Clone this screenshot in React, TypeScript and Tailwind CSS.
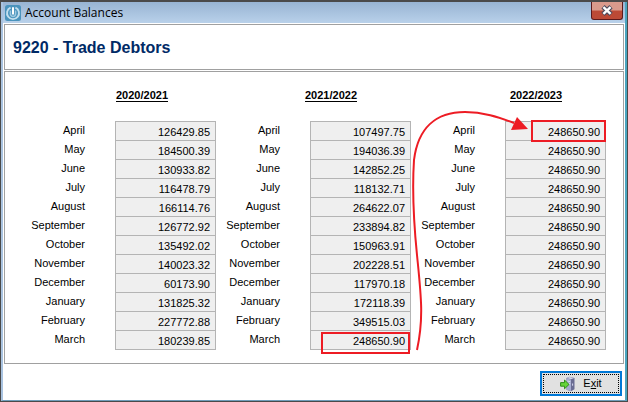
import React from "react";

interface YearBalances {
    year: string;
    headingClass: string;
    values: string[];
    marked?: number;
    markClass?: string;
}

const MONTHS = [
    "April", "May", "June", "July", "August", "September",
    "October", "November", "December", "January", "February", "March",
];

const YEARS: YearBalances[] = [
    {
        year: "2020/2021",
        headingClass: "pl-[95px]",
        values: [
            "126429.85", "184500.39", "130933.82", "116478.79", "166114.76", "126772.92",
            "135492.02", "140023.32", "60173.90", "131825.32", "227772.88", "180239.85",
        ],
    },
    {
        year: "2021/2022",
        headingClass: "pl-[89px]",
        values: [
            "107497.75", "194036.39", "142852.25", "118132.71", "264622.07", "233894.82",
            "150963.91", "202228.51", "117970.18", "172118.39", "349515.03", "248650.90",
        ],
        marked: 11,
        markClass: "top-[1px] right-0 w-[89px]",
    },
    {
        year: "2022/2023",
        headingClass: "pl-[99px]",
        values: Array(12).fill("248650.90"),
        marked: 0,
        markClass: "-top-[2px] -right-px w-[75px]",
    },
];

const PowerIcon = () => (
    <svg width="16" height="16" viewBox="0 0 16 16" className="shrink-0">
        <rect width="16" height="16" rx="2.5" fill="#4a93bc" />
        <path d="M5.6 2.6A6 6 0 1 0 10.4 2.6" fill="none" stroke="#c3dfee" strokeWidth="1.9" />
        <path d="M5.4 5.6v3.2a2.6 2.6 0 0 0 5.2 0V5.6" fill="none" stroke="#9cc8e0" strokeWidth="1.5" />
        <path d="M8 2.2v7.3" stroke="#ffffff" strokeWidth="2" />
    </svg>
);

const ExitIcon = () => (
    <svg width="16" height="16" viewBox="0 0 16 16" className="shrink-0">
        <path d="M6.5 2 9.5.8 14.5 2v11.2l-3.5 2-4.5-1.5z" fill="#6a6c93" />
        <path d="M6.5 2.2 11 3.4v11.8l-4.5-1.5z" fill="#a6abd0" />
        <path d="M6.5 2.1 9.7 1l4.5 1.1L11 3.3z" fill="#cfd3e8" />
        <path d="M7.3 5l3 .7M7.3 7l3 .7" stroke="#dfe2f2" strokeWidth=".9" />
        <path d="M12.6 7.5v2.2" stroke="#d5d8ee" strokeWidth="1" />
        <path d="M.6 6.6h3.9V4L9 8.4l-4.5 4.4v-2.6H.6z" fill="#66d43a" stroke="#2f8f1c" strokeWidth="1" />
    </svg>
);

const BalanceTable = ({ data }: { data: YearBalances }) => (
    <table className="flex-1 border-collapse">
        <thead>
            <tr>
                <th colSpan={2} className={`h-[33px] pb-[18px] text-left align-top font-bold leading-[15px] ${data.headingClass}`}>
                    <span className="inline-block h-[13px] border-b border-black leading-[13px]">{data.year}</span>
                </th>
            </tr>
        </thead>
        <tbody>
            {MONTHS.map((month, i) => (
                <tr key={month} className="h-[19px]">
                    <th scope="row" className="pr-[30px] pb-[3px] text-right font-normal leading-[14px]">{month}</th>
                    <td className="relative w-[100px] border border-[#b4b4b4] bg-[#efefef] pr-[5px] pt-[2px] text-right leading-[14px]">
                        {data.values[i]}
                        {data.marked === i && (
                            <span className={`absolute z-10 h-[22px] border-2 border-[#ed1c24] ${data.markClass}`} />
                        )}
                    </td>
                </tr>
            ))}
        </tbody>
    </table>
);

export default function App() {
    return (
        <div className="border border-t-2 border-[#4a4a4a] bg-white font-['Liberation_Sans',Arial,sans-serif] text-[11px] text-black">
            <div className="border-x-2 border-b border-b-[#6f9dba] border-l-[#a9c3e0] border-r-[#4aa5bf]">
                <header className="flex h-[21px] items-center justify-between bg-linear-to-b from-[#98b4d3] to-[#b9d1ea] px-[2px]">
                    <div className="flex items-center gap-1">
                        <PowerIcon />
                        <span className="font-['Open_Sans','Noto_Sans',sans-serif] text-[12px] leading-4">Account Balances</span>
                    </div>
                    <button
                        type="button"
                        aria-label="Close"
                        className="mb-[3px] flex h-[18px] w-8 items-center justify-center rounded-b-[3px] border border-t-0 border-[#5b1a1c] bg-linear-to-b from-[#d99a8c] from-45% to-[#bc4a36] to-55%"
                    >
                        <svg width="14" height="11" viewBox="0 0 14 11">
                            <path d="M3 1.8 11 9.2M11 1.8 3 9.2" stroke="#4b4a5c" strokeWidth="4.6" />
                            <path d="M3.4 2.2 10.6 8.8M10.6 2.2 3.4 8.8" stroke="#ffffff" strokeWidth="2.4" />
                        </svg>
                    </button>
                </header>

                <main className="flex flex-col gap-px px-px pt-px">
                    <section className="flex h-[46px] items-center border border-[#a0a0a0] px-2">
                        <h1 className="pt-px text-[16px] font-bold leading-5 text-[#002a66]">9220 - Trade Debtors</h1>
                    </section>

                    <section className="relative flex border border-[#a0a0a0] pt-4 pr-[17px] pb-[13px] pl-4">
                        {YEARS.map((y) => (
                            <BalanceTable key={y.year} data={y} />
                        ))}
                        <svg className="pointer-events-none absolute top-0 right-0" width="220" height="292" viewBox="403 72 220 292">
                            <path d="M417 350C424 318 421 295 417 255C413 215 412 190 414 160C418 128 436 112 465 112C483 112 498 117 514 123" fill="none" stroke="#ed1c24" strokeWidth="2" />
                            <path d="M517 117 528 129 511 130z" fill="#ed1c24" />
                        </svg>
                    </section>
                </main>

                <footer className="flex justify-end px-[3px] pt-[7px] pb-1">
                    <button type="button" className="h-[25px] w-[82px] border-2 border-[#0078d7] bg-[#e1e1e1] p-px">
                        <span className="flex h-full items-center justify-center gap-[7px] border border-dotted border-black">
                            <ExitIcon />
                            <span>E<u>x</u>it</span>
                        </span>
                    </button>
                </footer>
            </div>
        </div>
    );
}
